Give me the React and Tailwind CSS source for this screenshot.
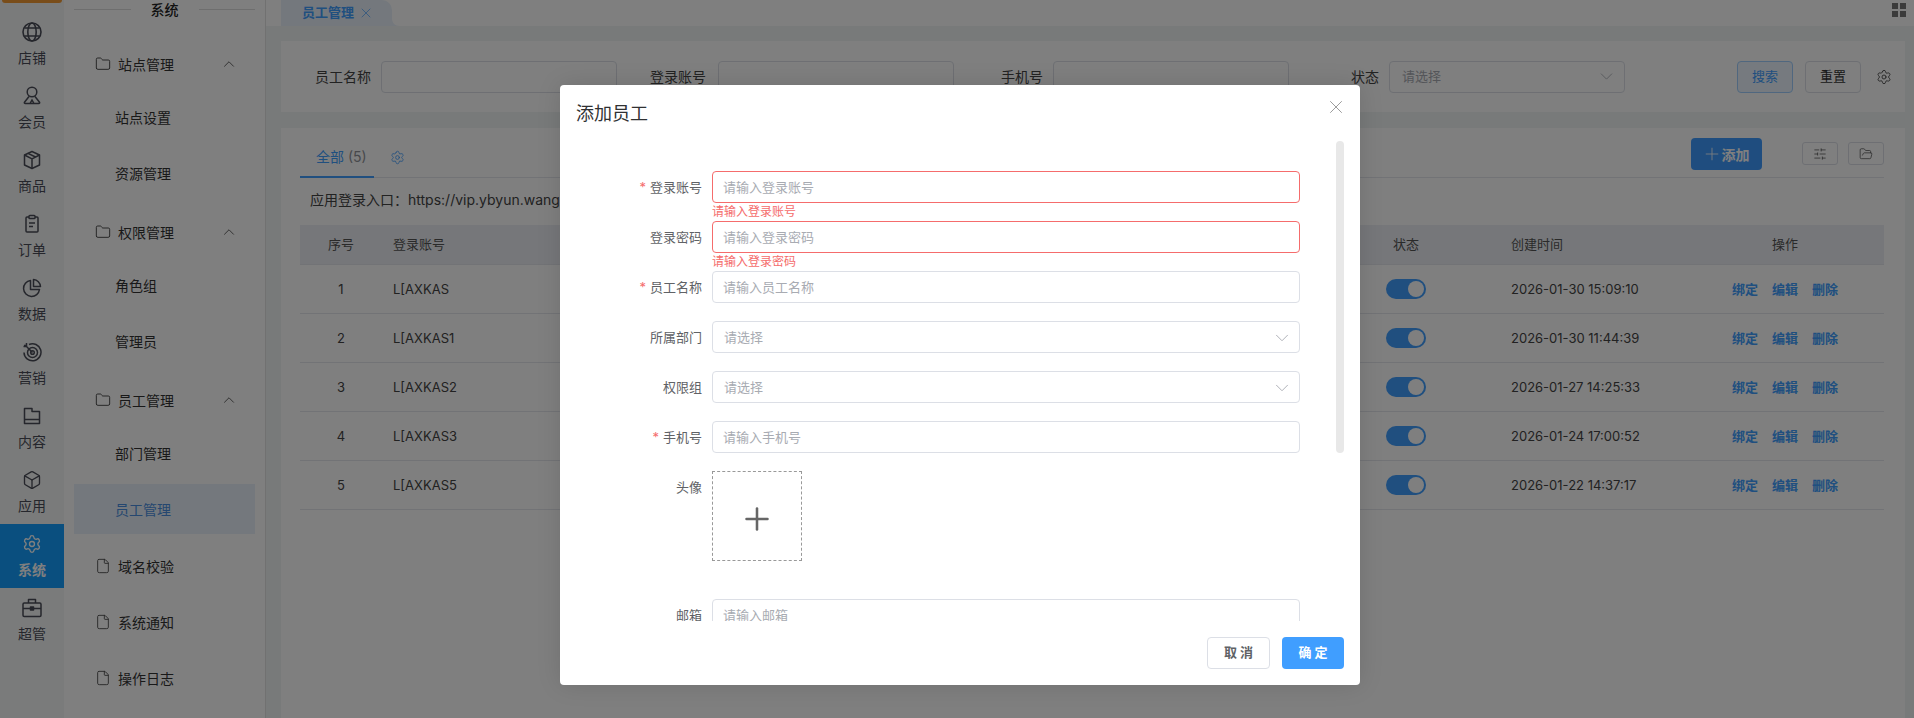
import { Box, ChevronDown, ChevronUp, File, Folder, FolderOpen, Plus, Settings, SlidersHorizontal, X } from 'lucide-react';

const Globe = () => (
  <svg width="20" height="20" viewBox="0 0 20 20" fill="none" stroke="currentColor" strokeWidth="1.6">
    <circle cx="10" cy="10" r="9" />
    <ellipse cx="10" cy="10" rx="4.2" ry="9" />
    <path d="M2.5 6h15M2.5 14h15" />
  </svg>
);

const Member = () => (
  <svg width="20" height="20" viewBox="0 0 20 20" fill="none" stroke="currentColor" strokeWidth="1.5">
    <circle cx="10" cy="6" r="4.8" />
    <path d="M7 10.5 2.5 16.2c-.4.6 0 1.3.7 1.3h13.6c.7 0 1.1-.7.7-1.3L13 10.5M8 17.5 10 14l2 3.5" />
  </svg>
);

const Cube = () => (
  <svg width="20" height="20" viewBox="0 0 20 20" fill="none" stroke="currentColor" strokeWidth="1.5" strokeLinejoin="round">
    <path d="M10 1.5 17.5 5v10L10 18.500 2.500 15V5Z" />
    <path d="M2.500 5 10 8.800 17.500 5M10 8.800v9.700M6 3.400l7.500 3.600" />
  </svg>
);

const Clipboard = () => (
  <svg width="20" height="20" viewBox="0 0 20 20" fill="none" stroke="currentColor" strokeWidth="1.5" strokeLinejoin="round">
    <path d="M7 3H5a1 1 0 0 0-1 1v13a1 1 0 0 0 1 1h10a1 1 0 0 0 1-1V4a1 1 0 0 0-1-1h-2" />
    <rect x="7" y="1.500" width="6" height="3" rx=".8" />
    <path d="M7 9h6M7 12.500h4" />
  </svg>
);

const Pie = () => (
  <svg width="20" height="20" viewBox="0 0 20 20" fill="none" stroke="currentColor" strokeWidth="1.5" strokeLinejoin="round">
    <path d="M8.500 2.500a8 8 0 1 0 9 9h-9Z" />
    <path d="M11.500 1.500a7.500 7.500 0 0 1 7 7h-7Z" />
  </svg>
);

const Target = () => (
  <svg width="20" height="20" viewBox="0 0 20 20" fill="none" stroke="currentColor" strokeWidth="1.5">
    <path d="M7 2.500a8.500 8.500 0 1 1-5 8" />
    <circle cx="10.500" cy="10.500" r="5" />
    <circle cx="10.500" cy="10.500" r="1.800" />
    <path d="M10.500 10.500 4.500 4.500M2 3.500h2.500V1M4.500 4.500V2M4.500 4.500H1.500" />
  </svg>
);

const Folder2 = () => (
  <svg width="20" height="20" viewBox="0 0 20 20" fill="none" stroke="currentColor" strokeWidth="1.5" strokeLinejoin="round">
    <path d="M2.500 2.500h7.500v3h7.500v12h-15Z" />
    <path d="M2.500 13.500h15" />
  </svg>
);

const Case = () => (
  <svg width="20" height="20" viewBox="0 0 20 20" fill="none" stroke="currentColor" strokeWidth="1.5" strokeLinejoin="round">
    <rect x="1" y="5" width="18" height="13.500" rx="1.200" />
    <path d="M6.500 5V1.500h7V5M1 10.500h18" />
    <rect x="8.500" y="9" width="3" height="3" fill="currentColor" />
  </svg>
);

const railItems = [
  { label: '店铺', icon: <Globe /> },
  { label: '会员', icon: <Member /> },
  { label: '商品', icon: <Cube /> },
  { label: '订单', icon: <Clipboard /> },
  { label: '数据', icon: <Pie /> },
  { label: '营销', icon: <Target /> },
  { label: '内容', icon: <Folder2 /> },
  { label: '应用', icon: <Box size={20} strokeWidth={1.6} /> },
  { label: '系统', icon: <Settings size={20} strokeWidth={1.6} />, active: true },
  { label: '超管', icon: <Case /> },
];

const menuGroups = [
  { title: '站点管理', children: ['站点设置', '资源管理'] },
  { title: '权限管理', children: ['角色组', '管理员'] },
  { title: '员工管理', children: ['部门管理', '员工管理'] },
];

const rows = [
  ['1', 'L[AXKAS', '2026-01-30 15:09:10'],
  ['2', 'L[AXKAS1', '2026-01-30 11:44:39'],
  ['3', 'L[AXKAS2', '2026-01-27 14:25:33'],
  ['4', 'L[AXKAS3', '2026-01-24 17:00:52'],
  ['5', 'L[AXKAS5', '2026-01-22 14:37:17'],
];

const Rail = () => (
  <div className="w-[64px] shrink-0 bg-[#f5f6f6]">
    <div className="mx-auto h-[3px] w-[60px] rounded-b-[4px] bg-[#f39a35]" />
    <div className="mt-[9px]">
      {railItems.map((item) => (
        <div
          key={item.label}
          className={`flex h-[64px] flex-col items-center pt-[10px] ${item.active ? 'bg-[#149eff] font-bold text-white' : 'text-[#4a4d58]'}`}
        >
          {item.icon}
          <span className="mt-[6px] text-[14px] leading-[20px]">{item.label}</span>
        </div>
      ))}
    </div>
  </div>
);

const Leaf = ({ label }) => (
  <div className="mt-[6px] flex h-[50px] items-center pl-[21px] text-[14px] text-[#333]">
    <File size={16} strokeWidth={1.3} className="mr-[7px] text-[#444]" />
    {label}
  </div>
);

const Menu = () => (
  <div className="w-[202px] shrink-0 border-r border-[#e2e2e2] bg-white pl-[10px] pr-[10px]">
    <div className="flex h-[18px] items-center gap-[20px] text-[14px] font-medium text-[#222]">
      <span className="h-px flex-1 bg-[#ddd]" />
      系统
      <span className="h-px flex-1 bg-[#ddd]" />
    </div>
    <div className="pt-[21px]">
      {menuGroups.map((group) => (
        <div key={group.title} className="mb-[9px]">
          <div className="flex h-[50px] items-center pl-[21px] pr-[17px] text-[14px] text-[#333]">
            <Folder size={16} strokeWidth={1.3} className="mr-[7px] text-[#333]" />
            <span className="flex-1">{group.title}</span>
            <ChevronUp size={18} strokeWidth={1} />
          </div>
          {group.children.map((child, i) => (
            <div
              key={child}
              className={`flex h-[50px] items-center pl-[41px] text-[14px] ${i === 0 ? 'mt-[3px]' : 'mt-[6px]'} ${group.title === '员工管理' && i === 1 ? 'bg-[#e8f1fb] text-[#4b8fe0]' : 'text-[#333]'}`}
            >
              {child}
            </div>
          ))}
        </div>
      ))}
      <div className="-mt-[2px]">
        <Leaf label="域名校验" />
        <Leaf label="系统通知" />
        <Leaf label="操作日志" />
      </div>
    </div>
  </div>
);

const SearchField = ({ label, labelClass, inputClass, select }) => (
  <div className={`flex items-center ${inputClass}`}>
    <span className={`text-[14px] text-[#444] ${labelClass}`}>{label}</span>
    <div className="flex h-[32px] w-[236px] items-center justify-between rounded-[4px] border border-[#dcdfe6] bg-white pl-[12px] pr-[7px] text-[13px] text-[#a8abb2]">
      {select && '请选择'}
      {select && <ChevronDown size={21} strokeWidth={1} />}
    </div>
  </div>
);

const Toggle = () => (
  <div className="flex h-[20px] w-[40px] items-center justify-end rounded-full bg-[#409eff] pr-[2px]">
    <span className="h-[16px] w-[16px] rounded-full bg-white" />
  </div>
);

const Main = () => (
  <div className="flex min-w-0 flex-1 flex-col bg-[#f0f5f4]">
    <div className="flex h-[26px] shrink-0 items-start justify-between bg-white pl-[15px] pr-[8px]">
      <div className="flex items-end">
        <div className="flex h-[26px] w-[111px] items-center rounded-tr-[10px] bg-[#e8f1fb] pl-[21px] text-[13px] font-bold text-[#409eff]">
          员工管理
          <X size={16} strokeWidth={1} className="ml-[4px] text-[#409eff]" />
        </div>
        <svg width="8" height="8" viewBox="0 0 8 8" className="text-[#e8f1fb]">
          <path d="M0 0C0 5 3 8 8 8H0Z" fill="currentColor" />
        </svg>
      </div>
      <div className="mt-[3px] grid grid-cols-2 gap-[2px]">
        <span className="h-[6px] w-[6px] bg-[#777]" />
        <span className="h-[6px] w-[6px] bg-[#777]" />
        <span className="h-[6px] w-[6px] bg-[#777]" />
        <span className="h-[6px] w-[6px] bg-[#777]" />
      </div>
    </div>

    <div className="ml-[15px] mr-[9px] mt-[15px] flex h-[71px] shrink-0 items-center bg-white pl-[34px]">
      <SearchField label="员工名称" labelClass="mr-[10px]" inputClass="" />
      <SearchField label="登录账号" labelClass="mr-[12px]" inputClass="ml-[33px]" />
      <SearchField label="手机号" labelClass="mr-[10px]" inputClass="ml-[47px]" />
      <SearchField label="状态" labelClass="mr-[10px]" inputClass="ml-[62px]" select />
      <div className="ml-[112px] flex h-[32px] w-[56px] items-center justify-center rounded-[4px] border border-[#a0cfff] bg-[#ecf5ff] text-[13px] text-[#409eff]">搜索</div>
      <div className="ml-[12px] flex h-[32px] w-[56px] items-center justify-center rounded-[4px] border border-[#dcdfe6] text-[13px] text-[#333]">重置</div>
      <Settings size={16} strokeWidth={1.3} className="ml-[15px] text-[#444]" />
    </div>

    <div className="ml-[15px] mr-[9px] mt-[16px] flex-1 bg-white pl-[19px] pr-[21px]">
      <div className="flex h-[50px] justify-between border-b border-[#e4e7ed]">
        <div className="flex items-start">
          <div className="h-[50px] w-[74px] border-b-[2px] border-[#409eff] pl-[16px] pt-[19px] text-[14px] leading-[20px] text-[#409eff]">
            全部 <span className="text-[#909399]">(5)</span>
          </div>
          <Settings size={15} strokeWidth={1.3} className="ml-[16px] mt-[22px] text-[#409eff]" />
        </div>
        <div className="flex items-start pt-[10px]">
          <div className="ml-[1px] flex h-[32px] w-[71px] items-center justify-center rounded-[4px] bg-[#3f9bff] text-[14px] font-bold text-white">
            <Plus size={20} strokeWidth={1} className="-ml-[2px]" />添加
          </div>
          <div className="ml-[40px] mt-[4px] flex h-[23px] w-[36px] items-center justify-center rounded-[3px] border border-[#dcdfe6] text-[#444]">
            <SlidersHorizontal size={14} strokeWidth={1.2} />
          </div>
          <div className="ml-[10px] mt-[4px] flex h-[23px] w-[36px] items-center justify-center rounded-[3px] border border-[#dcdfe6] text-[#444]">
            <FolderOpen size={14} strokeWidth={1.2} />
          </div>
        </div>
      </div>
      <div className="flex h-[47px] items-center pb-[5px] pl-[10px] text-[14px] text-[#444]">应用登录入口：https://vip.ybyun.wang/login/index</div>
      <div className="flex h-[40px] items-center border-b border-[#e4e7ed] bg-[#eceff4] text-[13px] text-[#555]">
        <div className="w-[82px] text-center">序号</div>
        <div className="flex-1 pl-[11px]">登录账号</div>
        <div className="w-[100px] text-center">状态</div>
        <div className="w-[266px] pl-[55px]">创建时间</div>
        <div className="w-[162px] pr-[36px] text-center">操作</div>
      </div>
      {rows.map(([no, account, time]) => (
        <div key={no} className="flex h-[49px] items-center border-b border-[#e4e7ed] text-[13px] text-[#444]">
          <div className="w-[82px] pt-[1px] text-center">{no}</div>
          <div className="flex-1 pl-[11px] pt-[1px]">{account}</div>
          <div className="flex w-[100px] justify-center"><Toggle /></div>
          <div className="w-[266px] pl-[55px] pt-[1px]">{time}</div>
          <div className="flex w-[162px] justify-center gap-[14px] pr-[36px] pt-[1px] font-bold text-[#409eff]">
            <span>绑定</span>
            <span>编辑</span>
            <span>删除</span>
          </div>
        </div>
      ))}
    </div>
  </div>
);

const FormRow = ({ label, required, error, children }) => (
  <div className="relative mb-[18px] flex">
    <div className="flex h-[32px] w-[152px] shrink-0 items-center justify-end pr-[10px] pt-[1px] text-[13px] text-[#606266]">
      {required && <span className="mr-[4px] text-[#f56c6c]">*</span>}
      {label}
    </div>
    {children}
    {error && <div className="absolute left-[152px] top-[32px] text-[12px] leading-[18px] text-[#f56c6c]">{error}</div>}
  </div>
);

const TextInput = ({ placeholder, error }) => (
  <div className={`flex h-[32px] w-[588px] items-center rounded-[4px] border pl-[10px] pt-[1px] text-[13px] text-[#a8abb2] ${error ? 'border-[#f56c6c]' : 'border-[#dcdfe6]'}`}>
    {placeholder}
  </div>
);

const SelectInput = () => (
  <div className="flex h-[32px] w-[588px] items-center justify-between rounded-[4px] border border-[#dcdfe6] pl-[11px] pr-[6px] pt-[1px] text-[13px] text-[#a8abb2]">
    请选择
    <ChevronDown size={22} strokeWidth={1} />
  </div>
);

const Dialog = () => (
  <div className="absolute inset-0 bg-black/50 pl-[560px] pt-[85px]">
    <div className="relative flex h-[600px] w-[800px] flex-col rounded-[4px] bg-white shadow-[0_0_24px_rgba(0,0,0,0.12)]">
      <div className="flex h-[56px] shrink-0 items-start justify-between pl-[16px] pr-[13px] pt-[15px]">
        <span className="pt-[1px] text-[18px] leading-[26px] text-[#303133]">添加员工</span>
        <X size={22} strokeWidth={0.8} className="-mt-[4px] text-[#777]" />
      </div>
      <div className="h-[480px] shrink-0 overflow-hidden pt-[30px]">
        <FormRow label="登录账号" required error="请输入登录账号"><TextInput placeholder="请输入登录账号" error /></FormRow>
        <FormRow label="登录密码" error="请输入登录密码"><TextInput placeholder="请输入登录密码" error /></FormRow>
        <FormRow label="员工名称" required><TextInput placeholder="请输入员工名称" /></FormRow>
        <FormRow label="所属部门"><SelectInput /></FormRow>
        <FormRow label="权限组"><SelectInput /></FormRow>
        <FormRow label="手机号" required><TextInput placeholder="请输入手机号" /></FormRow>
        <FormRow label="头像">
          <div className="mb-[20px] flex h-[90px] w-[90px] items-center justify-center border border-dashed border-[#999] pt-[6px]">
            <Plus size={36} strokeWidth={1.7} className="text-[#666]" />
          </div>
        </FormRow>
        <FormRow label="邮箱"><TextInput placeholder="请输入邮箱" /></FormRow>
      </div>
      <div className="absolute right-[16px] top-[56px] h-[312px] w-[8px] rounded-full bg-[#e8e8e8]" />
      <div className="flex flex-1 items-start justify-end gap-[12px] pr-[16px] pt-[16px] text-[13px] font-bold">
        <div className="flex h-[32px] w-[63px] items-center justify-center rounded-[4px] border border-[#dcdfe6] text-[#606266]">取 消</div>
        <div className="flex h-[32px] w-[62px] items-center justify-center rounded-[4px] bg-[#409eff] text-white">确 定</div>
      </div>
    </div>
  </div>
);

export default function App() {
  return (
    <div className="relative flex h-[718px] w-[1914px] overflow-hidden bg-white font-['Inter','Noto_Sans_CJK_SC',sans-serif]">
      <Rail />
      <Menu />
      <Main />
      <Dialog />
    </div>
  );
}
